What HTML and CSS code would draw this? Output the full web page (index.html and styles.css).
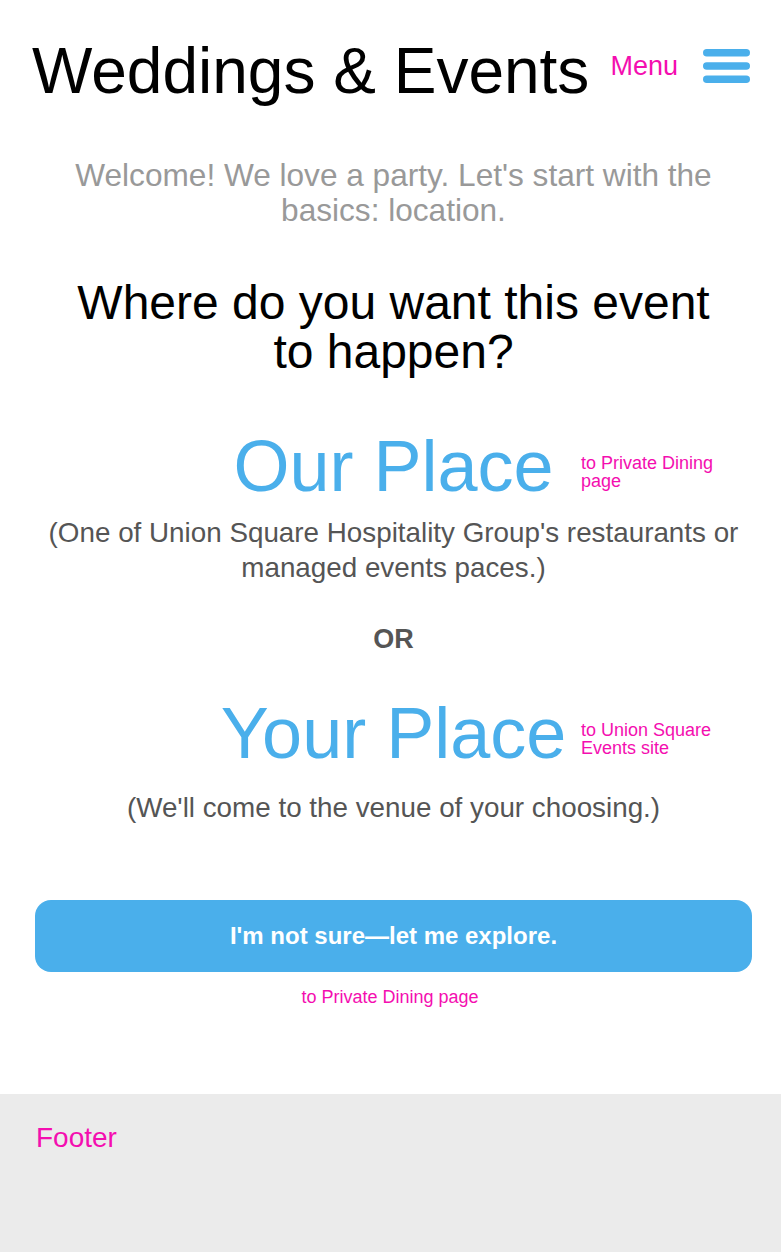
FILE: index.html
```html
<!DOCTYPE html>
<html lang="en">
<head>
<meta charset="utf-8">
<title>Weddings &amp; Events</title>
<link rel="stylesheet" href="styles.css">
</head>
<body>
<header class="site-header">
  <h1 class="site-title">Weddings &amp; Events</h1>
  <nav class="menu">
    <span class="menu-label">Menu</span>
    <svg class="menu-icon" width="47" height="34" viewBox="0 0 47 34" aria-hidden="true">
      <rect x="0" y="0" width="47" height="7.5" rx="3.75" fill="#4aafeb"/>
      <rect x="0" y="13.25" width="47" height="7.5" rx="3.75" fill="#4aafeb"/>
      <rect x="0" y="26.5" width="47" height="7.5" rx="3.75" fill="#4aafeb"/>
    </svg>
  </nav>
</header>
<main class="content">
  <p class="welcome">Welcome! We love a party. Let's start with the basics: location.</p>
  <h2 class="question">Where do you want this event to happen?</h2>
  <div class="option option-ours">
    <a class="option-title">Our Place</a>
    <span class="note note-side">to Private Dining page</span>
  </div>
  <p class="option-desc">(One of Union Square Hospitality Group's restaurants or managed events paces.)</p>
  <p class="or">OR</p>
  <div class="option option-yours">
    <a class="option-title">Your Place</a>
    <span class="note note-side">to Union Square Events site</span>
  </div>
  <p class="option-desc option-desc-yours">(We'll come to the venue of your choosing.)</p>
  <a class="explore-btn">I'm not sure—let me explore.</a>
  <p class="note note-center">to Private Dining page</p>
</main>
<footer class="site-footer">
  <span class="footer-label">Footer</span>
</footer>
</body>
</html>
```
FILE: styles.css
```css
* { box-sizing: border-box; }
html, body { margin: 0; padding: 0; }
body {
  font-family: "Liberation Sans", Arial, sans-serif;
  background: #ffffff;
  color: #000;
  min-height: 100vh;
  display: flex;
  flex-direction: column;
}
.site-header {
  display: flex;
  justify-content: space-between;
  align-items: flex-start;
  padding: 35px 31px 0 32px;
}
.site-title {
  margin: 0;
  font-size: 64px;
  line-height: 72px;
  font-weight: normal;
  color: #000;
}
.menu {
  display: flex;
  align-items: center;
  gap: 25px;
  height: 34px;
  margin-top: 14px;
}
.menu-label {
  font-size: 27px;
  line-height: 30px;
  color: #f40eb0;
}
.menu-icon { display: block; }
.content {
  padding: 0 29px 0 35px;
  text-align: center;
}
.welcome {
  margin: 51px 0 0;
  font-size: 31.6px;
  line-height: 35px;
  color: #999999;
}
.question {
  margin: 50px auto 0;
  max-width: 660px;
  font-size: 48px;
  line-height: 49px;
  font-weight: normal;
  color: #000;
}
.option {
  position: relative;
  margin-top: 50px;
}
.option-yours { margin-top: 39px; }
.option-title {
  font-size: 72px;
  line-height: 80px;
  color: #4aafeb;
  text-decoration: none;
}
.note {
  font-size: 18px;
  color: #f40eb0;
}
.note-side {
  position: absolute;
  left: 546px;
  top: 28px;
  width: 150px;
  line-height: 18px;
  text-align: left;
}
.option-desc {
  margin: 9px 0 0;
  font-size: 27.8px;
  line-height: 35px;
  color: #555555;
}
.option-desc-yours { margin-top: 17px; }
.or {
  margin: 39px 0 0;
  font-size: 27px;
  line-height: 30px;
  font-weight: bold;
  color: #555555;
}
.explore-btn {
  display: flex;
  align-items: center;
  justify-content: center;
  margin-top: 75px;
  height: 72px;
  border-radius: 16px;
  background: #4aafeb;
  color: #ffffff;
  font-size: 24px;
  font-weight: bold;
  text-decoration: none;
}
.note-center {
  margin: 15px 0 0;
  padding-right: 7px;
  line-height: 20px;
}
.site-footer {
  flex: 1;
  margin-top: 87px;
  background: #ebebeb;
  padding: 28px 36px;
}
.footer-label {
  font-size: 28px;
  line-height: 32px;
  color: #f40eb0;
}
```
